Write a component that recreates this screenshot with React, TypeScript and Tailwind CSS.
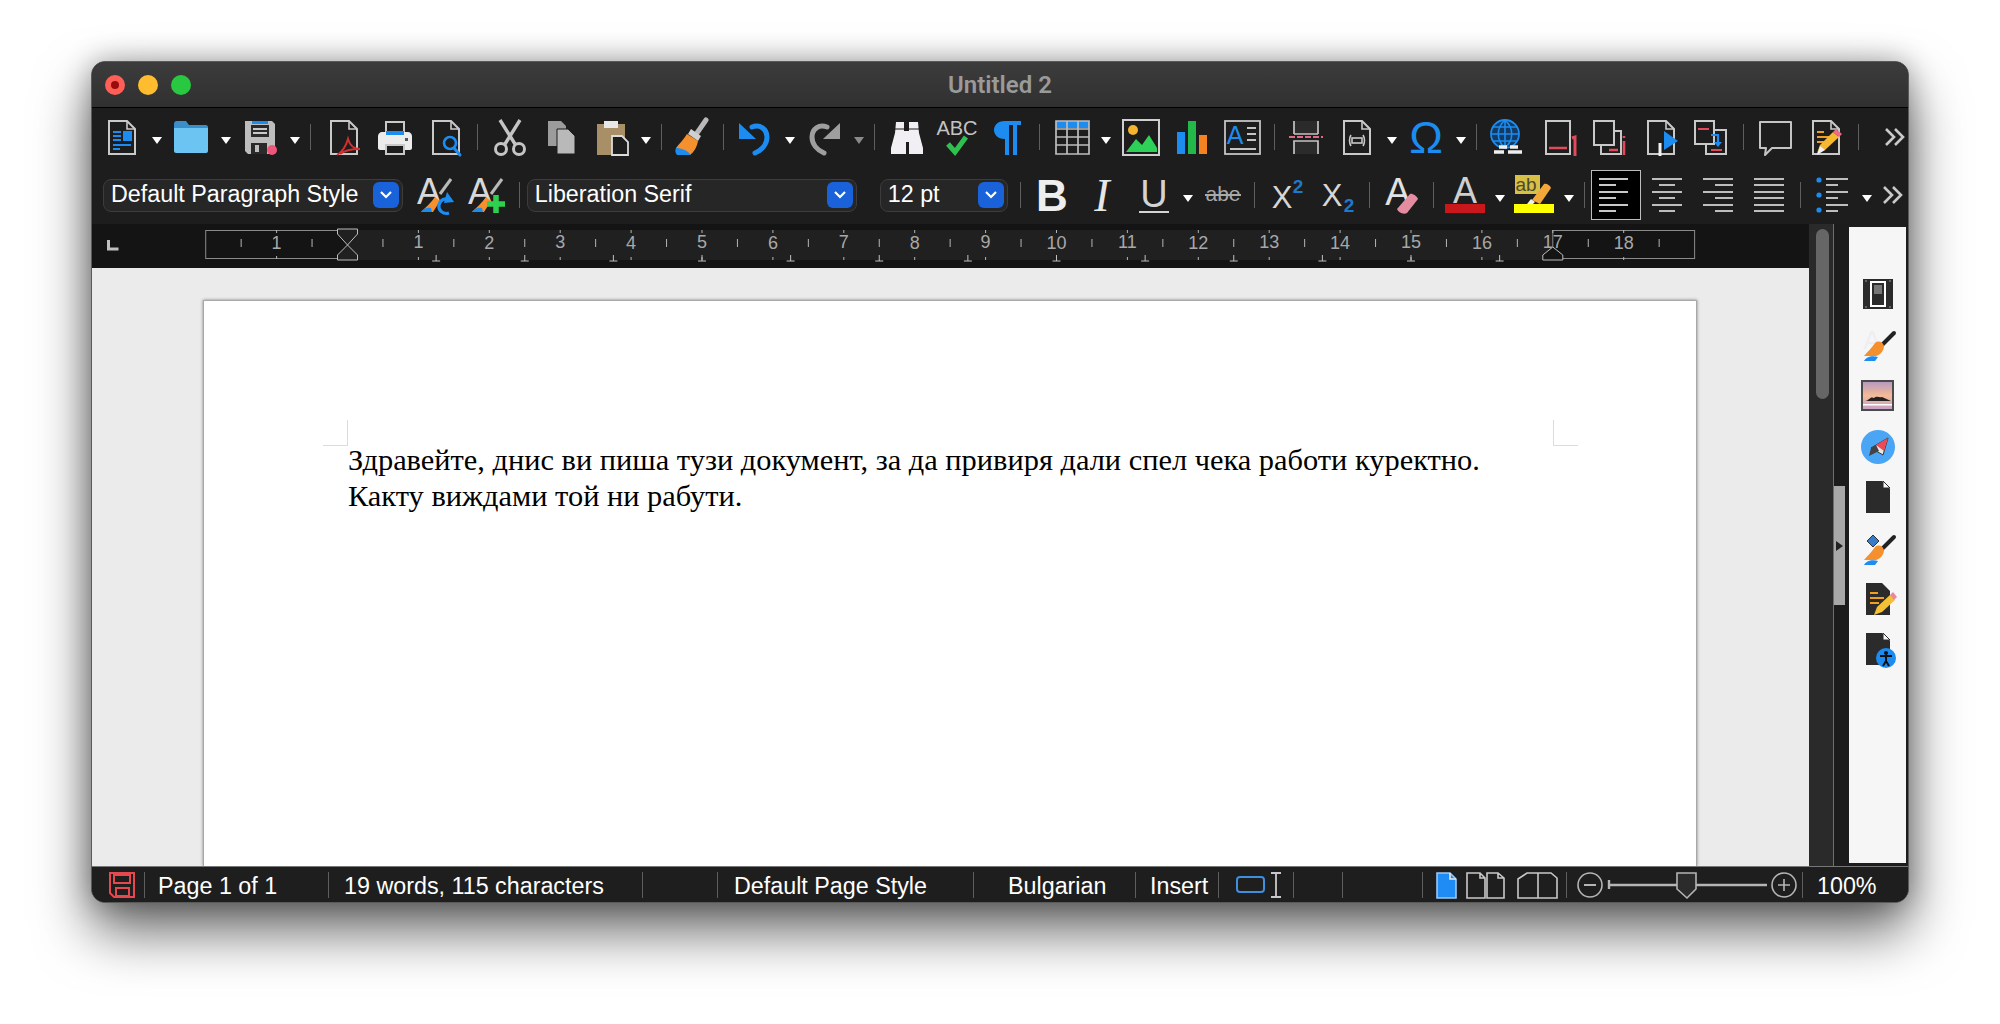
import type { ReactNode } from 'react';

const GRAY = '#c9c9c9';
const BLUE = '#1d8cf0';
const RED = '#e04a5a';
const SANS = 'Liberation Sans, sans-serif';

// 40x40 drawing area with room around it so the glyph text is not clipped
function Ico({ children }: { children: ReactNode }) {
  return (
    <svg width="48" height="56" viewBox="-4 -8 48 56" fill="none" className="shrink-0">
      {children}
    </svg>
  );
}

function Page({ x = 7, y = 4, w = 26, h = 33, c = GRAY, fill = 'none' }: { x?: number; y?: number; w?: number; h?: number; c?: string; fill?: string }) {
  return (
    <>
      <path d={`M${x} ${y}h${w - 8}l8 8v${h - 8}H${x}z`} stroke={c} strokeWidth="2" fill={fill} />
      <path d={`M${x + w - 8} ${y}v8h8`} stroke={c} strokeWidth="1.6" />
    </>
  );
}

const icons: Record<string, ReactNode> = {
  newDoc: (
    <Ico>
      <Page />
      <path d="M11 15h8M11 19h8M11 23h8M11 28h18M11 32h7" stroke={BLUE} strokeWidth="2" />
      <rect x="21" y="14" width="9" height="10" fill={BLUE} />
    </Ico>
  ),
  open: (
    <Ico>
      <path d="M3 7c0-2 1-3 3-3h9l3 4h17c1 0 2 1 2 2v24H3z" fill="#3a8fca" />
      <path d="M3 11h34v23c0 1-1 2-2 2H5c-1 0-2-1-2-2z" fill="#6cc4f2" />
    </Ico>
  ),
  save: (
    <Ico>
      <path d="M5 4h27l3 3v30H8l-3-3z" fill="#bdbdbd" />
      <path d="M12 4h16v3H12z" fill={BLUE} />
      <path d="M11 8h18v12H11z" fill="#2a2a2a" />
      <path d="M13 12h14M13 16h14" stroke="#c9c9c9" strokeWidth="2" />
      <path d="M11 26h16v11H11z" fill="#2a2a2a" />
      <rect x="15" y="28" width="4" height="7" fill="#bdbdbd" />
      <circle cx="32" cy="33" r="5" fill="#f0567a" />
    </Ico>
  ),
  pdf: (
    <Ico>
      <Page />
      <path d="M13 38c5-3 9-9 11-16 2 7 6 10 12 10-6 0-15 1-20 5" stroke="#d32f2f" strokeWidth="2" />
    </Ico>
  ),
  print: (
    <Ico>
      <path d="M11 5h18v12H11z" stroke={GRAY} strokeWidth="2" />
      <path d="M3 19c0-2 2-4 4-4h26c2 0 4 2 4 4v12c0 1-1 2-2 2H5c-1 0-2-1-2-2z" fill="#ececec" />
      <path d="M11 14h18v4H11z" fill={BLUE} />
      <path d="M11 28h18v9H11z" fill="#1d1d1d" stroke={GRAY} strokeWidth="2" />
      <rect x="30" y="21" width="3" height="3" fill="#555" />
    </Ico>
  ),
  preview: (
    <Ico>
      <Page />
      <circle cx="24" cy="26" r="6" stroke={BLUE} strokeWidth="2.6" fill="#1d1d1d" />
      <path d="M28 31l6 7" stroke={BLUE} strokeWidth="3" strokeLinecap="round" />
    </Ico>
  ),
  cut: (
    <Ico>
      <path d="M10 3l15 24M30 3 15 27" stroke="#c4c4c4" strokeWidth="3.4" />
      <circle cx="11" cy="32" r="5.5" stroke="#c4c4c4" strokeWidth="3" />
      <circle cx="29" cy="32" r="5.5" stroke="#c4c4c4" strokeWidth="3" />
    </Ico>
  ),
  copy: (
    <Ico>
      <path d="M7 4h13l5 5v20H7z" fill="#9c9c9c" />
      <path d="M16 12h11l7 7v18H16z" fill="#b9b9b9" stroke="#1d1d1d" />
    </Ico>
  ),
  paste: (
    <Ico>
      <path d="M5 7h28v31H5z" fill="#a88f68" />
      <path d="M12 4h14v7H12z" fill="#e8e8e8" />
      <path d="M20 19h10l6 6v13H20z" fill="#1d1d1d" stroke="#dcdcdc" strokeWidth="1.8" />
    </Ico>
  ),
  brush: (
    <Ico>
      <path d="M35 3 26 16" stroke="#b9b9b9" strokeWidth="5" strokeLinecap="round" />
      <path d="M20 12l10 7-3 5-10-7z" fill="#d0d0d0" />
      <path d="M16 17l11 7c-1 6-4 11-8 14L5 31c3-4 8-9 11-14z" fill="#f5902e" />
      <path d="M5 31c5 0 11 2 15 7H6c-2-2-2-5-1-7z" fill={BLUE} />
    </Ico>
  ),
  undo: (
    <Ico>
      <path d="M17 10c8-3 15 2 15 10 0 7-5 13-12 16" stroke={BLUE} strokeWidth="5" strokeLinecap="round" />
      <path d="M4 6v16h17z" fill={BLUE} />
    </Ico>
  ),
  redo: (
    <Ico>
      <path d="M23 10c-8-3-15 2-15 10 0 7 5 13 12 16" stroke="#9e9e9e" strokeWidth="5" strokeLinecap="round" />
      <path d="M36 6v16H19z" fill="#9e9e9e" />
    </Ico>
  ),
  find: (
    <Ico>
      <path d="M10 5h8v9h5V5h9l1 11 4 15v6H23V25h-3v12H5v-6l4-15z" fill="#f1eff4" />
      <path d="M9 12h10M23 12h10" stroke="#1d1d1d" />
    </Ico>
  ),
  spell: (
    <Ico>
      <text x="20" y="18" textAnchor="middle" fontFamily={SANS} fontSize="20" fill="#c4c4c4">ABC</text>
      <path d="M11 27l7 8 11-15" stroke="#2fc04f" strokeWidth="5" />
    </Ico>
  ),
  pilcrow: (
    <Ico>
      <path d="M33 4H17C9 4 6 9 6 13s3 9 11 9v16h4V8h4v30h4V8h4z" fill={BLUE} />
    </Ico>
  ),
  table: (
    <Ico>
      <path d="M4 4h33v7H4z" fill={BLUE} />
      <path d="M4 4h33v33H4zM4 12h33M4 20h33M4 28h33M15 4v33M26 4v33" stroke="#bdbdbd" strokeWidth="1.7" />
    </Ico>
  ),
  image: (
    <Ico>
      <rect x="2" y="3" width="36" height="35" stroke="#cfcfcf" strokeWidth="2" />
      <circle cx="12" cy="13" r="5" fill="#f5b32e" />
      <path d="M5 35l10-13 6 6 7-10 8 13v4H5z" fill="#2ed158" />
    </Ico>
  ),
  chart: (
    <Ico>
      <rect x="5" y="15" width="8" height="22" fill={BLUE} />
      <rect x="16" y="4" width="8" height="33" fill="#22b84a" />
      <rect x="27" y="18" width="8" height="19" fill="#f58220" />
    </Ico>
  ),
  textbox: (
    <Ico>
      <rect x="3" y="4" width="35" height="33" stroke="#c4c4c4" strokeWidth="1.8" />
      <text x="13" y="27" textAnchor="middle" fontFamily={SANS} fontSize="25" fill={BLUE}>A</text>
      <path d="M25 11h9M25 17h9M25 23h9M8 32h26" stroke="#c4c4c4" strokeWidth="1.8" />
    </Ico>
  ),
  pageBreak: (
    <Ico>
      <path d="M8 17V4h24v13H8zM8 37V24h24v13" fill="#2b2b2b" />
      <path d="M8 17V4M32 17V4M8 17h24M8 37V24h24v13" stroke="#c4c4c4" strokeWidth="1.7" />
      <path d="M3 20h34" stroke="#e06a85" strokeWidth="2" strokeDasharray="6 2" />
    </Ico>
  ),
  field: (
    <Ico>
      <Page />
      <path d="M14 18c-2 3-2 8 0 11M26 18c2 3 2 8 0 11" stroke={GRAY} strokeWidth="1.6" />
      <rect x="15" y="21" width="10" height="5" stroke={GRAY} strokeWidth="1.6" />
    </Ico>
  ),
  omega: (
    <Ico>
      <text x="20" y="36" textAnchor="middle" fontFamily={SANS} fontSize="45" fill={BLUE}>Ω</text>
    </Ico>
  ),
  web: (
    <Ico>
      <circle cx="17" cy="17" r="14" stroke={BLUE} strokeWidth="1.8" fill="#123a63" />
      <path d="M3 17h28M5 10h24M5 24h24M17 3v28M17 3c-9 8-9 20 0 28M17 3c9 8 9 20 0 28" stroke={BLUE} strokeWidth="1.6" />
      <path d="M11 30h8M22 30h8M6 35h10M20 35h14" stroke="#eee" strokeWidth="3.4" />
    </Ico>
  ),
  foot: (
    <Ico>
      <rect x="7" y="4" width="24" height="33" stroke={GRAY} strokeWidth="2" />
      <path d="M10 31h18" stroke={RED} strokeWidth="2.6" />
      <path d="M33 21l3-1v19" stroke={RED} strokeWidth="3" />
    </Ico>
  ),
  end: (
    <Ico>
      <rect x="4" y="4" width="20" height="24" stroke={GRAY} strokeWidth="2" />
      <path d="M11 28v9h20V14h-7" stroke={GRAY} strokeWidth="2" />
      <path d="M19 33h9" stroke={RED} strokeWidth="2.4" />
      <path d="M34 24v14M34 19v2" stroke={RED} strokeWidth="2.6" />
    </Ico>
  ),
  bookmark: (
    <Ico>
      <Page />
      <path d="M19 26v13" stroke="#f2f2f2" strokeWidth="3" />
      <path d="M23 14l14 10-14 9z" fill={BLUE} />
    </Ico>
  ),
  crossRef: (
    <Ico>
      <rect x="3" y="4" width="19" height="23" stroke={GRAY} strokeWidth="2" />
      <path d="M22 13h12v24H14v-10" stroke={GRAY} strokeWidth="2" />
      <path d="M6 12h11M19 33h11" stroke={RED} strokeWidth="2.2" />
      <path d="M19 18h7v9" stroke={BLUE} strokeWidth="2.2" />
      <path d="M22 25h8l-4 5z" fill={BLUE} />
    </Ico>
  ),
  comment: (
    <Ico>
      <path d="M5 5h31v26H17l-7 7 1-7H5z" stroke="#c4c4c4" strokeWidth="2" strokeLinejoin="round" />
    </Ico>
  ),
  track: (
    <Ico>
      <Page />
      <path d="M11 15h7M11 20h14M11 25h10" stroke="#f0a020" strokeWidth="2" />
      <path d="M11 36l3-8 13-13 6 5-14 13z" fill="#f5b82e" />
      <path d="M27 15l3-3 6 5-3 3z" fill="#ee6a85" />
      <path d="M11 38l3-9 5 4z" fill="#f2f2f2" />
    </Ico>
  ),
  styleUpdate: (
    <Ico>
      <text x="13" y="29" textAnchor="middle" fontFamily={SANS} fontSize="36" fill="#d8d8d8">A</text>
      <path d="M35 4 24 19" stroke="#b9b9b9" strokeWidth="3" />
      <path d="M19 22l5 4-7 11H5c4-4 10-9 14-15z" fill="#f5902e" />
      <path d="M5 37c2-3 6-5 10-4l1 4z" fill={BLUE} />
      <path d="M33 38c-6 2-11-3-10-8 1-5 6-8 12-5" stroke={BLUE} strokeWidth="3.2" />
      <path d="M31 17l7 10-10 1z" fill={BLUE} />
    </Ico>
  ),
  styleNew: (
    <Ico>
      <text x="13" y="29" textAnchor="middle" fontFamily={SANS} fontSize="36" fill="#d8d8d8">A</text>
      <path d="M35 4 24 19" stroke="#b9b9b9" strokeWidth="3" />
      <path d="M19 22l5 4-7 11H5c4-4 10-9 14-15z" fill="#f5902e" />
      <path d="M5 37c2-3 6-5 10-4l1 4z" fill={BLUE} />
      <path d="M29 20v18M20 29h18" stroke="#2fd04f" strokeWidth="5.5" />
    </Ico>
  ),
  bold: (
    <Ico>
      <text x="20" y="36" textAnchor="middle" fontFamily={SANS} fontWeight="700" fontSize="44" fill="#eeeeee">B</text>
    </Ico>
  ),
  italic: (
    <Ico>
      <text x="19" y="36" textAnchor="middle" fontFamily="Liberation Serif, serif" fontStyle="italic" fontSize="46" fill="#e6e6e6">I</text>
    </Ico>
  ),
  underline: (
    <Ico>
      <text x="20" y="32" textAnchor="middle" fontFamily={SANS} fontSize="38" fill="#d4d4d4">U</text>
      <path d="M5 37h30" stroke="#d4d4d4" strokeWidth="2" />
    </Ico>
  ),
  strike: (
    <Ico>
      <text x="20" y="26" textAnchor="middle" fontFamily={SANS} fontSize="21" fill="#a9a9a9">abe</text>
      <path d="M2 20h36" stroke="#a9a9a9" strokeWidth="2" />
    </Ico>
  ),
  sup: (
    <Ico>
      <text x="15" y="33" textAnchor="middle" fontFamily={SANS} fontSize="31" fill="#d6d6d6">X</text>
      <text x="31" y="18" textAnchor="middle" fontFamily={SANS} fontWeight="700" fontSize="19" fill="#1f78d0">2</text>
    </Ico>
  ),
  sub: (
    <Ico>
      <text x="14" y="31" textAnchor="middle" fontFamily={SANS} fontSize="31" fill="#d6d6d6">X</text>
      <text x="31" y="37" textAnchor="middle" fontFamily={SANS} fontWeight="700" fontSize="19" fill="#1f78d0">2</text>
    </Ico>
  ),
  clear: (
    <Ico>
      <text x="16" y="30" textAnchor="middle" fontFamily={SANS} fontSize="38" fill="#e2e2e2">A</text>
      <path d="M15 34l13-15c2-1 7 2 8 5L25 38c-4 2-9-1-10-4z" fill="#e48da0" />
    </Ico>
  ),
  fontColor: (
    <Ico>
      <text x="20" y="28" textAnchor="middle" fontFamily={SANS} fontSize="36" fill="#cfcfcf">A</text>
      <rect x="0" y="29" width="40" height="9" fill="#c9181b" />
    </Ico>
  ),
  highlight: (
    <Ico>
      <rect x="1" y="0" width="25" height="19" fill="#d8bf45" />
      <text x="12" y="16" textAnchor="middle" fontFamily={SANS} fontSize="19" fill="#4d4a2a">ab</text>
      <path d="M18 25 30 9c2-1 6 1 7 4L26 29z" fill="#f3a93a" />
      <path d="M13 29l4-5 4 3-2 2z" fill="#eee" />
      <rect x="0" y="29" width="40" height="9" fill="#ffff00" />
    </Ico>
  ),
  left: (
    <Ico>
      <path d="M3 4h29M3 10h17M3 17h29M3 23h17M3 30h29M3 36h17" stroke="#c9c9c9" strokeWidth="2.2" />
    </Ico>
  ),
  center: (
    <Ico>
      <path d="M5 4h30M12 10h16M5 17h30M12 23h16M5 30h30M12 36h16" stroke="#bdbdbd" strokeWidth="2.2" />
    </Ico>
  ),
  right: (
    <Ico>
      <path d="M5 4h30M17 10h18M5 17h30M17 23h18M5 30h30M17 36h18" stroke="#bdbdbd" strokeWidth="2.2" />
    </Ico>
  ),
  justify: (
    <Ico>
      <path d="M5 4h30M5 10h30M5 17h30M5 23h30M5 30h30M5 36h30" stroke="#bdbdbd" strokeWidth="2.2" />
    </Ico>
  ),
  list: (
    <Ico>
      <circle cx="6" cy="5" r="2.6" fill={BLUE} />
      <circle cx="6" cy="20" r="2.6" fill={BLUE} />
      <circle cx="6" cy="35" r="2.6" fill={BLUE} />
      <path d="M13 4h22M13 10h12M13 17h22M13 23h12M13 30h22M13 36h12" stroke="#bdbdbd" strokeWidth="2.2" />
    </Ico>
  ),
};

const sideIcons: ReactNode[] = [
  <Ico key="props">
    <rect x="5" y="5" width="30" height="30" fill="#2b2b2b" />
    <rect x="13" y="8" width="14" height="24" stroke="#fff" strokeWidth="2" fill="#2b2b2b" />
    <rect x="16" y="11" width="8" height="9" fill="#777" />
    <path d="M7 7h2M31 7h2M7 33h2M31 33h2" stroke="#999" />
  </Ico>,
  <Ico key="styles">
    <text x="14" y="24" textAnchor="middle" fontFamily={SANS} fontSize="26" fill="#eeeef4">A</text>
    <path d="M36 8 24 20" stroke="#222" strokeWidth="4" strokeLinecap="round" />
    <path d="M17 18c4-3 8-1 9 3 0 5-4 9-8 10H6c3-4 8-8 11-13z" fill="#f5902e" />
    <path d="M6 36c2-4 8-6 14-4l-3 4z" fill={BLUE} />
  </Ico>,
  <Ico key="gallery">
    <rect x="3" y="4" width="33" height="31" fill="#4a4a4a" />
    <defs>
      <linearGradient id="sky" x1="0" y1="0" x2="0" y2="1">
        <stop offset="0" stopColor="#b89ac2" />
        <stop offset="0.5" stopColor="#f5bb94" />
        <stop offset="1" stopColor="#c9a0c8" />
      </linearGradient>
    </defs>
    <rect x="5" y="6" width="29" height="27" fill="url(#sky)" />
    <path d="M7 25c5-1 5-5 9-3 3-3 5 0 8-1 3 1 6 3 9 4z" fill="#222" />
    <rect x="5" y="28" width="29" height="1.5" fill="#fff" />
  </Ico>,
  <Ico key="nav">
    <circle cx="20" cy="20" r="17" fill="#4aa5f5" />
    <path d="M13 21l17-10-5 17z" fill="#e8e8e8" stroke="#333" strokeWidth="1" />
    <path d="M18 18l12-7-4 13z" fill="#ee4a55" />
    <path d="M13 21l5-3 3 6-10 5z" fill="#444" />
  </Ico>,
  <Ico key="page">
    <path d="M8 3h16l8 8v24H8z" fill="#2b2b2b" />
    <path d="M25 3l7 7h-7z" fill="#f6f6f6" stroke="#2b2b2b" />
  </Ico>,
  <Ico key="styleInspector">
    <path d="M15 6l6 6-6 6-6-6z" fill="#3a7bc8" stroke="#333" />
    <path d="M36 8 24 20" stroke="#222" strokeWidth="4" strokeLinecap="round" />
    <path d="M17 18c4-3 8-1 9 3 0 5-4 9-8 10H6c3-4 8-8 11-13z" fill="#f5902e" />
    <path d="M6 36c2-4 8-6 14-4l-3 4z" fill={BLUE} />
  </Ico>,
  <Ico key="manageChanges">
    <path d="M8 3h16l8 8v24H8z" fill="#2b2b2b" />
    <path d="M12 13h8M12 18h14M12 23h9" stroke="#f0a020" strokeWidth="2" />
    <path d="M16 35l3-8 13-12 5 5-13 12z" fill="#f5c035" />
    <path d="M32 15l3-3 4 5-3 3z" fill="#e887a0" />
  </Ico>,
  <Ico key="a11y">
    <path d="M8 2h16l8 8v24H8z" fill="#2b2b2b" />
    <path d="M25 2l7 7h-7z" fill="#f6f6f6" stroke="#2b2b2b" />
    <circle cx="28" cy="27" r="10" fill={BLUE} />
    <circle cx="28" cy="22" r="2" fill="#111" />
    <path d="M22 25h12M28 25v5M28 30l-3 5M28 30l3 5" stroke="#111" strokeWidth="2" />
  </Ico>,
];

function Slot({ name, active = false }: { name: string; active?: boolean }) {
  return (
    <div className="w-[50.9px] flex items-center justify-center shrink-0">
      {active ? (
        <div className="w-[50px] h-[50px] bg-black border border-[#bdbdbd] flex items-center justify-center">
          {icons[name]}
        </div>
      ) : (
        icons[name]
      )}
    </div>
  );
}

function Dd({ dim = false }: { dim?: boolean }) {
  return (
    <div className="w-[18px] flex items-center justify-center shrink-0 pt-[6px]">
      <div
        className={`w-0 h-0 border-l-[5px] border-r-[5px] border-t-[7px] border-l-transparent border-r-transparent ${dim ? 'border-t-[#8a8a8a]' : 'border-t-white'}`}
      />
    </div>
  );
}

function Sep({ className = '' }: { className?: string }) {
  return (
    <div className={`w-[13px] flex items-center justify-center shrink-0 ${className}`}>
      <div className="w-px h-[26px] bg-[#5e5e5e]" />
    </div>
  );
}

function More({ className = '' }: { className?: string }) {
  return (
    <div className={`w-[24px] flex items-center justify-center shrink-0 text-[#c9c9c9] ${className}`}>
      <svg width="22" height="20" viewBox="0 0 22 20" fill="none" stroke="currentColor" strokeWidth="2.6">
        <path d="M2 2l8 8-8 8M11 2l8 8-8 8" />
      </svg>
    </div>
  );
}

function Combo({ label, width }: { label: string; width: string }) {
  return (
    <div className={`${width} h-[33px] rounded-lg bg-[#262626] border border-[#3c3c3c] flex items-center justify-between pl-[7px] pr-[3px] shrink-0`}>
      <span className="text-[23.3px] text-white leading-none">{label}</span>
      <div className="w-[26px] h-[26px] rounded-md bg-[#1a62d9] flex items-center justify-center">
        <svg width="14" height="10" viewBox="0 0 14 10" fill="none" stroke="white" strokeWidth="2.2">
          <path d="M2 2l5 5 5-5" />
        </svg>
      </div>
    </div>
  );
}

const X = (u: number) => 255.5 + u * 70.9;

function Ruler() {
  const nums = Array.from({ length: 18 }, (_, i) => i + 1);
  const halves = Array.from({ length: 21 }, (_, i) => i - 2).filter(u => u < 19);
  const tabs = Array.from({ length: 13 }, (_, i) => (i + 1) * 1.25);
  return (
    <svg className="block shrink-0" width="1717" height="44" viewBox="0 0 1717 44" fontFamily={SANS}>
      <rect width="1717" height="44" fill="#141414" />
      <rect x={X(0)} y="6" width={70.9 * 17} height="30" fill="#202020" />
      <rect x={X(-2)} y="6.5" width={70.9 * 2} height="28" fill="none" stroke="#8a8a8a" />
      <rect x={X(17)} y="6.5" width={70.9 * 2} height="28" fill="none" stroke="#8a8a8a" />
      {nums.map(n => (
        <g key={n}>
          <text x={X(n)} y={n % 2 ? 24 : 25} textAnchor="middle" fontSize="18" fill="#a8a8a8">{n}</text>
          <path d={`M${X(n)} 6v3M${X(n)} 33v3`} stroke="#b5b5b5" />
        </g>
      ))}
      <text x={X(-1)} y="25" textAnchor="middle" fontSize="18" fill="#a8a8a8">1</text>
      <path d={`M${X(-1)} 6v3M${X(-1)} 32v3`} stroke="#b5b5b5" />
      {halves.map(u => (
        <path key={u} d={`M${X(u + 0.5)} 15v8`} stroke="#b5b5b5" />
      ))}
      {tabs.map(t => (
        <path key={t} d={`M${X(t)} 31v6M${X(t) - 4} 37h8`} stroke="#c0c0c0" />
      ))}
      <path d="M16.5 16v9h10" stroke="#c0c0c0" strokeWidth="3" fill="none" />
      <path
        d={`M${X(0) - 10} 5h20v5l-10 11 10 10v5h-20v-5l10-10-10-11z`}
        fill="#202020"
        stroke="#bdbdbd"
      />
      <path
        d={`M${X(17)} 23l10 8v5h-20v-5z`}
        fill="#141414"
        stroke="#bdbdbd"
      />
    </svg>
  );
}

function Cell({ w, children, className = '' }: { w: string; children?: ReactNode; className?: string }) {
  return (
    <div className={`${w} h-full flex items-center shrink-0 relative ${className}`}>
      {children}
      <span className="absolute right-0 top-[5px] bottom-[4px] w-px bg-[#5e5e5e]" />
    </div>
  );
}

function StatusBar() {
  return (
    <div className="h-[36px] bg-[#1e1e1e] border-t border-[#777] flex items-stretch text-white text-[23.3px] leading-none shrink-0">
      <Cell w="w-[53px]" className="pl-[16px]">
        <svg width="28" height="28" viewBox="0 0 28 28" fill="none" stroke="#e5484d" strokeWidth="2">
          <path d="M2 2h24v24H6l-4-4z" />
          <path d="M6 4h16v8H6zM8 17h13v8H8z" />
        </svg>
      </Cell>
      <Cell w="w-[184px]" className="pl-[13px] pt-[5px]">Page 1 of 1</Cell>
      <Cell w="w-[314px]" className="pl-[15px] pt-[5px]">19 words, 115 characters</Cell>
      <Cell w="w-[75px]" />
      <Cell w="w-[256px]" className="pl-[16px] pt-[5px]">Default Page Style</Cell>
      <Cell w="w-[162px]" className="pl-[34px] pt-[5px]">Bulgarian</Cell>
      <Cell w="w-[83px]" className="pl-[14px] pt-[5px]">Insert</Cell>
      <Cell w="w-[75px]" className="pl-[17px] gap-[6px]">
        <svg width="50" height="30" viewBox="0 0 50 30" fill="none">
          <rect x="1" y="7" width="27" height="15" rx="3" stroke="#3f8fdc" strokeWidth="2" />
          <path d="M35 3h10M35 27h10M40 3v24" stroke="#c9c9c9" strokeWidth="1.8" />
        </svg>
      </Cell>
      <Cell w="w-[49px]" />
      <Cell w="w-[80px]" />
      <Cell w="w-[144px]" className="pl-[13px]">
        <svg width="125" height="28" viewBox="0 0 125 28" fill="none" stroke="#c9c9c9" strokeWidth="1.6">
          <path d="M1 2h13l6 6v19H1z" fill="#1f8cf5" stroke="#9dc8f5" />
          <path d="M14 2v6h6" stroke="#e6e6e6" />
          <path d="M31 2h13l5 5v20H31zM51 2h11l6 5v20H51zM44 2v5h5M62 2v5h6" />
          <path d="M82 8l9-6h11v25H82zM102 2h13l6 5v20h-19M82 27h20" />
        </svg>
      </Cell>
      <Cell w="w-[236px]" className="pl-[10px]">
        <svg width="222" height="30" viewBox="0 0 222 30" fill="none" stroke="#b5b5b5">
          <circle cx="13" cy="15" r="12" strokeWidth="1.6" />
          <path d="M7 15h12" strokeWidth="2" />
          <path d="M32 15h158M32 10v9" strokeWidth="2.4" />
          <path d="M100 3h19v16l-9 9-10-9z" fill="#2b2b2b" strokeWidth="1.6" />
          <circle cx="207" cy="15" r="12" strokeWidth="1.6" />
          <path d="M201 15h12M207 9v12" strokeWidth="1.6" />
        </svg>
      </Cell>
      <div className="flex-1 h-full flex items-center pl-[14px] pt-[5px]">100%</div>
    </div>
  );
}

export default function App() {
  return (
    <div className="w-[2000px] h-[1024px] bg-white overflow-hidden pt-[61px] pl-[91px] font-['Liberation_Sans',sans-serif]">
      <div className="w-[1818px] h-[842px] rounded-[14px] overflow-hidden flex flex-col bg-[#1d1d1d] border border-[#5a5a5a] shadow-[0_28px_55px_rgba(0,0,0,0.6),0_0_28px_rgba(0,0,0,0.3)]">
        {/* title bar */}
        <div className="h-[46px] shrink-0 bg-gradient-to-b from-[#3c3c3c] to-[#303030] border-b border-black flex items-center relative">
          <div className="flex items-center gap-[13px] pl-[13px]">
            <div className="w-5 h-5 rounded-full bg-[#ff5f57] flex items-center justify-center">
              <div className="w-[8px] h-[8px] rounded-full bg-[#9a0b0b]" />
            </div>
            <div className="w-5 h-5 rounded-full bg-[#febc2e]" />
            <div className="w-5 h-5 rounded-full bg-[#28c840]" />
          </div>
          <div className="absolute inset-0 flex items-center justify-center text-[24px] font-semibold text-[#9a9a9a] font-['Roboto',sans-serif]">
            Untitled 2
          </div>
        </div>

        {/* standard toolbar */}
        <div className="h-[58px] shrink-0 flex items-stretch pl-[5px]">
          <Slot name="newDoc" /><Dd />
          <Slot name="open" /><Dd />
          <Slot name="save" /><Dd />
          <Sep className="mr-[2px]" />
          <Slot name="pdf" /><Slot name="print" /><Slot name="preview" />
          <Sep />
          <Slot name="cut" /><Slot name="copy" /><Slot name="paste" /><Dd />
          <Sep className="-mr-[2px]" />
          <Slot name="brush" />
          <Sep />
          <Slot name="undo" /><Dd />
          <Slot name="redo" /><Dd dim />
          <Sep />
          <Slot name="find" /><Slot name="spell" /><Slot name="pilcrow" />
          <Sep />
          <Slot name="table" /><Dd />
          <Slot name="image" /><Slot name="chart" /><Slot name="textbox" />
          <Sep />
          <Slot name="pageBreak" /><Slot name="field" /><Dd />
          <Slot name="omega" /><Dd />
          <Sep />
          <Slot name="web" /><Slot name="foot" /><Slot name="end" /><Slot name="bookmark" /><Slot name="crossRef" />
          <Sep />
          <Slot name="comment" /><Slot name="track" />
          <Sep />
          <More className="ml-[18px]" />
        </div>

        {/* formatting toolbar */}
        <div className="h-[58px] shrink-0 flex items-stretch pl-[11px]">
          <div className="flex items-center"><Combo label="Default Paragraph Style" width="w-[300px]" /></div>
          <div className="w-[8px] shrink-0" />
          <Slot name="styleUpdate" /><Slot name="styleNew" />
          <Sep />
          <div className="flex items-center ml-[1px]"><Combo label="Liberation Serif" width="w-[330px]" /></div>
          <div className="flex items-center ml-[23px] mr-[6px]"><Combo label="12 pt" width="w-[128px]" /></div>
          <Sep />
          <Slot name="bold" /><Slot name="italic" /><Slot name="underline" /><Dd />
          <Slot name="strike" />
          <Sep />
          <Slot name="sup" /><Slot name="sub" />
          <Sep />
          <Slot name="clear" />
          <Sep />
          <Slot name="fontColor" /><Dd />
          <Slot name="highlight" /><Dd />
          <Sep />
          <Slot name="left" active /><Slot name="center" /><Slot name="right" /><Slot name="justify" />
          <Sep />
          <Slot name="list" /><Dd />
          <More className="ml-[5px]" />
        </div>

        {/* document area */}
        <div className="flex-1 min-h-0 flex items-stretch">
          <div className="w-[1717px] shrink-0 flex flex-col min-h-0">
            <Ruler />
            <div className="flex-1 min-h-0 bg-[#ebebeb] pl-[111px] pt-[32px] overflow-hidden">
              <div className="relative w-[1494px] h-full bg-white border-t border-x border-[#a8a8a8] shadow-[0_0_3px_rgba(0,0,0,0.45)] pl-[144px] pt-[142px] font-['Liberation_Serif',serif] text-black text-[30.4px] leading-[35.7px]">
                <div className="absolute left-[119px] top-[119px] w-[25px] h-[26px] border-r border-b border-[#dcdcdc]" />
                <div className="absolute left-[1349px] top-[119px] w-[25px] h-[26px] border-l border-b border-[#dcdcdc]" />
                <p className="whitespace-nowrap">Здравейте, днис ви пиша тузи документ, за да привиря дали спел чека работи куректно.</p>
                <p className="whitespace-nowrap">Какту виждами той ни рабути.</p>
              </div>
            </div>
          </div>
          {/* scrollbar */}
          <div className="w-[25px] shrink-0 bg-[#2a2a2a] border-r border-[#6e6e6e] pt-[5px] pl-[7px]">
            <div className="w-[13px] h-[170px] rounded-full bg-[#666666]" />
          </div>
          {/* collapse handle */}
          <div className="w-[15px] shrink-0 bg-[#1c1c1c] pt-[262px]">
            <div className="w-[11px] h-[119px] bg-[#a8a8a8] flex items-center">
              <div className="w-0 h-0 ml-[2px] border-y-[5px] border-l-[7px] border-y-transparent border-l-[#222]" />
            </div>
          </div>
          {/* sidebar */}
          <div className="w-[57px] shrink-0 mt-[3px] mb-[3px] bg-[#f6f6f6] flex flex-col items-center pt-[41px]">
            {sideIcons.map((icon, i) => (
              <div key={i} className="h-[51px] flex items-center justify-center">{icon}</div>
            ))}
          </div>
        </div>

        <StatusBar />
      </div>
    </div>
  );
}
